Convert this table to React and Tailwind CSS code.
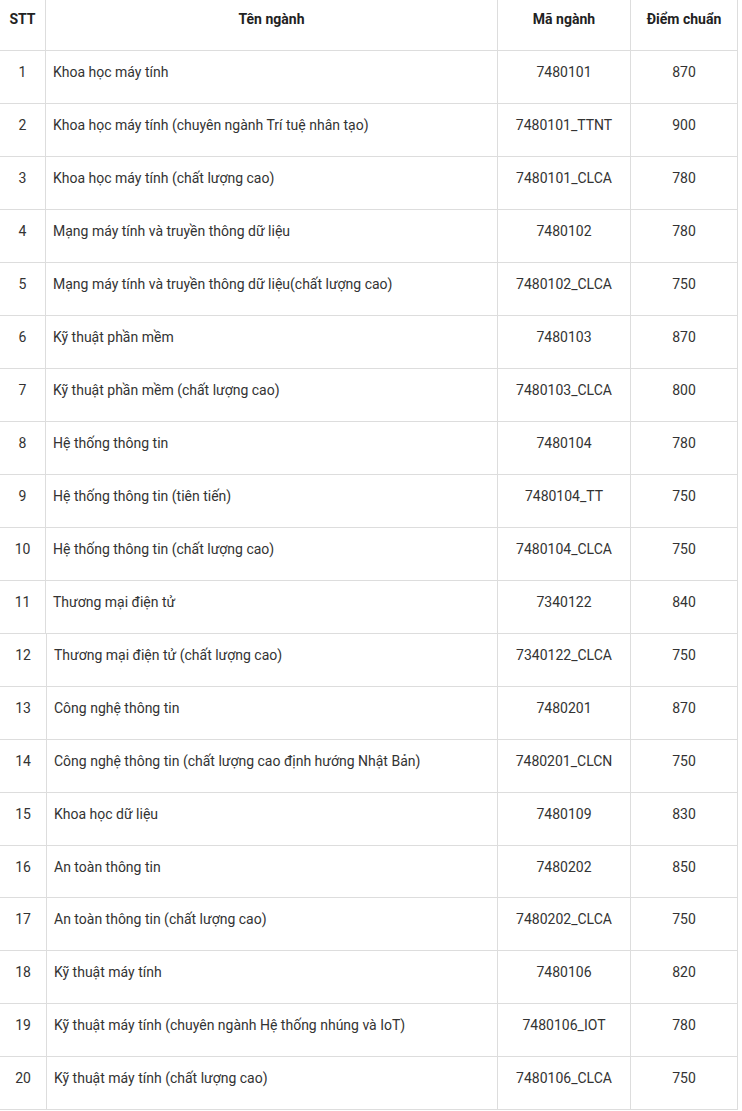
import React from 'react'

const rows = [
    { stt: 1, name: 'Khoa học máy tính', code: '7480101', score: 870 },
    { stt: 2, name: 'Khoa học máy tính (chuyên ngành Trí tuệ nhân tạo)', code: '7480101_TTNT', score: 900 },
    { stt: 3, name: 'Khoa học máy tính (chất lượng cao)', code: '7480101_CLCA', score: 780 },
    { stt: 4, name: 'Mạng máy tính và truyền thông dữ liệu', code: '7480102', score: 780 },
    { stt: 5, name: 'Mạng máy tính và truyền thông dữ liệu(chất lượng cao)', code: '7480102_CLCA', score: 750 },
    { stt: 6, name: 'Kỹ thuật phần mềm', code: '7480103', score: 870 },
    { stt: 7, name: 'Kỹ thuật phần mềm (chất lượng cao)', code: '7480103_CLCA', score: 800 },
    { stt: 8, name: 'Hệ thống thông tin', code: '7480104', score: 780 },
    { stt: 9, name: 'Hệ thống thông tin (tiên tiến)', code: '7480104_TT', score: 750 },
    { stt: 10, name: 'Hệ thống thông tin (chất lượng cao)', code: '7480104_CLCA', score: 750 },
    { stt: 11, name: 'Thương mại điện tử', code: '7340122', score: 840 },
    { stt: 12, name: 'Thương mại điện tử (chất lượng cao)', code: '7340122_CLCA', score: 750 },
    { stt: 13, name: 'Công nghệ thông tin', code: '7480201', score: 870 },
    { stt: 14, name: 'Công nghệ thông tin (chất lượng cao định hướng Nhật Bản)', code: '7480201_CLCN', score: 750 },
    { stt: 15, name: 'Khoa học dữ liệu', code: '7480109', score: 830 },
    { stt: 16, name: 'An toàn thông tin', code: '7480202', score: 850, short: true },
    { stt: 17, name: 'An toàn thông tin (chất lượng cao)', code: '7480202_CLCA', score: 750 },
    { stt: 18, name: 'Kỹ thuật máy tính', code: '7480106', score: 820 },
    { stt: 19, name: 'Kỹ thuật máy tính (chuyên ngành Hệ thống nhúng và IoT)', code: '7480106_IOT', score: 780 },
    { stt: 20, name: 'Kỹ thuật máy tính (chất lượng cao)', code: '7480106_CLCA', score: 750 },
]

const head = 'border-r border-b border-[#dddddd] pt-[9px] pb-[21px] leading-5 align-top'

function ScoreTable({ data, showHead, firstCol, secondCol }) {
    return (
        <table className="table-fixed border-separate border-spacing-0 w-[738px]">
            <colgroup>
                <col className={firstCol} />
                <col className={secondCol} />
                <col className="w-[133px]" />
                <col className="w-[107px]" />
            </colgroup>
            {showHead &&
                <thead>
                    <tr className="text-[#222222] font-bold text-center">
                        <th className={head}>STT</th>
                        <th className={head}>Tên ngành</th>
                        <th className={head}>Mã ngành</th>
                        <th className={head}>Điểm chuẩn</th>
                    </tr>
                </thead>
            }
            <tbody>
                {data.map(row => {
                    // row 16 is a little shorter in the source page
                    const cell = 'border-r border-b border-[#dddddd] pt-[11px] leading-5 align-top ' + (row.short ? 'pb-[20px]' : 'pb-[21px]')
                    return <tr key={row.stt} className="text-[#333333]">
                        <td className={cell + ' text-center'}>{row.stt}</td>
                        <td className={cell + ' pl-[7px] pr-2'}>{row.name}</td>
                        <td className={cell + ' text-center'}>{row.code}</td>
                        <td className={cell + ' text-center'}>{row.score}</td>
                    </tr>
                })}
            </tbody>
        </table>
    )
}

export default function App() {
    return (
        <div className="bg-white min-h-[1111px] w-[742px] text-[14px] font-['Roboto','Liberation_Sans',sans-serif]">
            <ScoreTable data={rows.slice(0, 11)} showHead firstCol="w-[46px]" secondCol="w-[452px]" />
            <ScoreTable data={rows.slice(11)} firstCol="w-[47px]" secondCol="w-[451px]" />
        </div>
    )
}
